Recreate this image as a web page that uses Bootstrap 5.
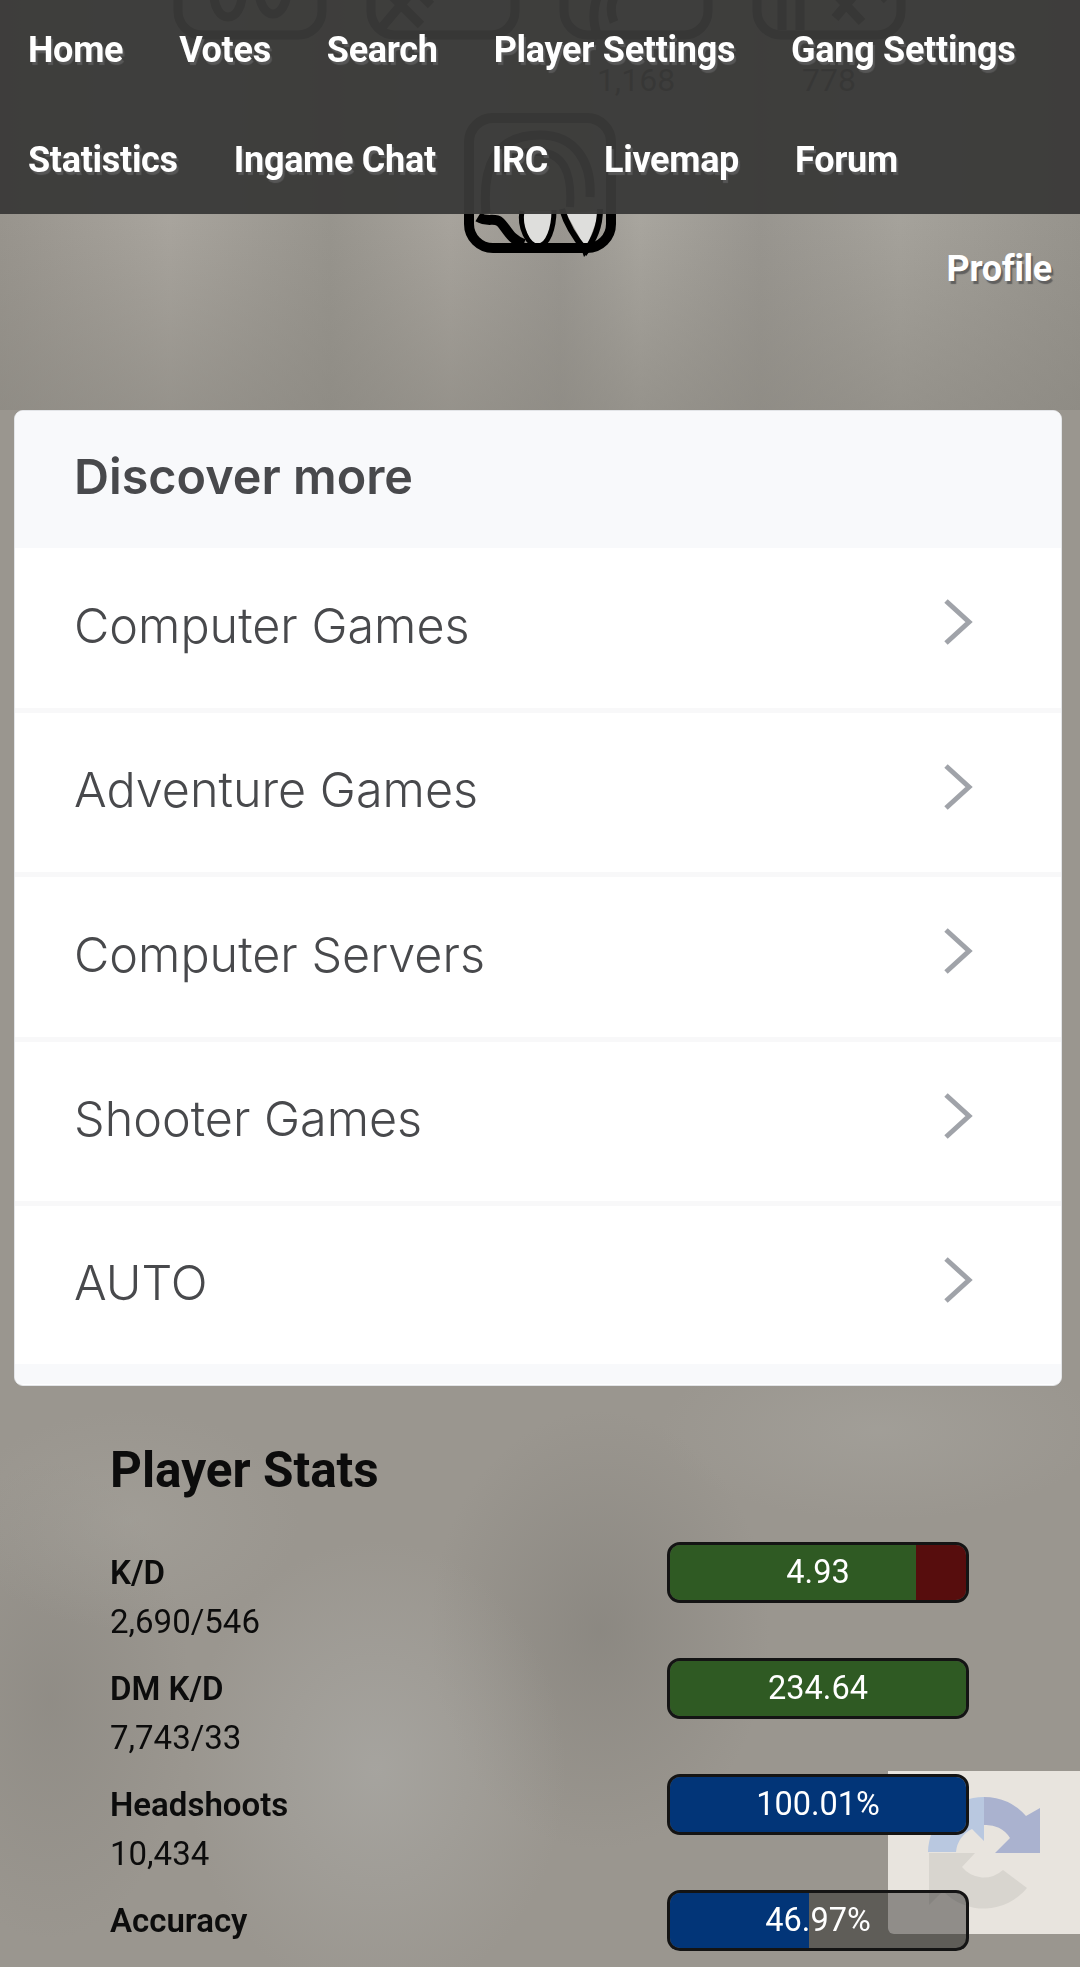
<!DOCTYPE html>
<html lang="en">
<head>
    <meta charset="UTF-8">
    <meta name="viewport" content="width=device-width, initial-scale=1.0">
    <title>Player Stats</title>
    <link rel="stylesheet" href="https://cdn.jsdelivr.net/npm/bootstrap@5.3.0/dist/css/bootstrap.min.css">
    <style>
        html, body { height: 1967px; overflow: hidden; }
        body {
            font-family: Roboto, "Liberation Sans", sans-serif;
            color: #0c0c0c;
            background-color: #9a968f;
            background-image:
                radial-gradient(ellipse 190px 230px at 376px 1770px, rgba(172,171,167,.65), transparent),
                radial-gradient(ellipse 170px 220px at 600px 1630px, rgba(130,127,121,.6), transparent),
                radial-gradient(ellipse 170px 110px at 130px 1520px, rgba(166,163,156,.5), transparent),
                radial-gradient(ellipse 220px 90px at 880px 1430px, rgba(170,168,162,.45), transparent),
                radial-gradient(ellipse 140px 240px at 50px 1700px, rgba(132,129,123,.45), transparent),
                linear-gradient(180deg, transparent 220px, rgba(138,135,128,.6) 410px),
                linear-gradient(90deg, #98948d 0, #a8a49d 170px, #97948d 330px, #a7a39c 450px, #999690 560px, #a8a59e 640px, #98958f 760px, #a5a29b 900px, #96938c 1080px);
            background-size: auto, auto, auto, auto, auto, 100% 410px, 100% 410px;
            background-repeat: no-repeat;
        }
        .top-bar { background: rgba(58,58,56,.955); height: 214px; align-items: flex-start; }
        .top-bar .nav-link, .profile-link {
            color: #fff;
            font-size: 36px;
            font-weight: 700;
            letter-spacing: -.3px;
            text-shadow: 2px 3px 1px rgba(90,90,90,.9);
        }
        .top-bar .nav-link { padding: 0 28px; height: 110px; line-height: 101px; }
        .top-bar .nav-item:last-child .nav-link { padding-right: 0; }
        .icon-strip { margin-top: -100px; gap: 39px; height: 140px; padding-left: 173px; }
        .icon-cell { width: 154px; }
        .count-strip { padding-left: 173px; gap: 39px; height: 60px; line-height: 80px; font-size: 32px; }
        .count-strip > div { width: 154px; text-align: center; }
        .center-icon { width: 152px; height: 140px; margin: 13px auto 0; display: block; overflow: visible; }
        .profile-link { display: block; text-align: right; padding-right: 28px; line-height: 52px; margin-top: -10px; margin-bottom: -2px; text-decoration: none; }

        .discover-box {
            margin: 117px 18px 0 14px;
            border: 1px solid #e3e5e8;
            border-radius: 9px;
            overflow: hidden;
            height: 976px;
            font-family: Inter, "Liberation Sans", sans-serif;
            color: #48494c;
        }
        .discover-box .card-header {
            height: 137px;
            background: #f8f9fb;
            border: 0;
            padding: 0 0 0 59px;
            line-height: 131px;
            font-size: 48.5px;
            font-weight: 600;
        }
        .discover-box > .list-group { border: 0; }
        .discover-box .list-group-item {
            height: 164.5px;
            border: 0;
            border-bottom: 5px solid #f8f8f9;
            padding: 0 88px 3px 59px;
            font-size: 48.5px;
            font-weight: 300;
            color: #48494c;
        }
        .discover-box .list-group-item:last-child { border-bottom: 0; height: 158px; }
        .discover-box .card-footer { height: 20px; padding: 0; background: #f8f9fb; border: 0; }
        .chev { width: 30px; height: 46px; margin-top: -8px; }

        .stats-wrap { margin: 54px 111px 0 110px; position: relative; z-index: 2; }
        .stats-title { font-size: 49.5px; font-weight: 700; line-height: 60px; margin-bottom: 42px; }
        .stat-row { margin-bottom: 16.5px; }
        .stat-name { font-size: 33px; font-weight: 600; line-height: 61px; }
        .stat-val { font-size: 33px; line-height: 38.5px; }
        .stat-bar {
            position: relative;
            width: 302px;
            height: 61px;
            border: 3px solid #141414;
            border-radius: 13px;
            background: rgba(0,0,0,.38);
        }
        .stat-bar .progress-bar { background: transparent; }
        .fill-green { background: #2f5a23 !important; }
        .fill-red { background: #570d0d !important; }
        .fill-blue { background: #023578 !important; }
        .stat-label {
            position: absolute;
            inset: 0;
            color: #fff;
            font-size: 32.5px;
            line-height: 55px;
            text-align: center;
        }
        .captcha-badge {
            position: fixed;
            left: 888px;
            top: 1771px;
            width: 192px;
            height: 163px;
            background: #e8e4de;
            border-bottom-left-radius: 6px;
            z-index: 1;
        }
    </style>
</head>
<body>
    <!-- Menu sits over the page -->
    <nav class="navbar fixed-top p-0 top-bar">
        <ul class="nav flex-wrap w-100">
            <li class="nav-item"><a class="nav-link" href="#">Home</a></li>
            <li class="nav-item"><a class="nav-link" href="#">Votes</a></li>
            <li class="nav-item"><a class="nav-link" href="#">Search</a></li>
            <li class="nav-item"><a class="nav-link" href="#">Player Settings</a></li>
            <li class="nav-item"><a class="nav-link" href="#">Gang Settings</a></li>
            <li class="nav-item"><a class="nav-link" href="#">Statistics</a></li>
            <li class="nav-item"><a class="nav-link" href="#">Ingame Chat</a></li>
            <li class="nav-item"><a class="nav-link" href="#">IRC</a></li>
            <li class="nav-item"><a class="nav-link" href="#">Livemap</a></li>
            <li class="nav-item"><a class="nav-link" href="#">Forum</a></li>
        </ul>
    </nav>

    <!-- Icons behind the menu -->
    <div class="d-flex icon-strip">
        <svg class="icon-cell" viewBox="0 0 154 140" fill="none" stroke="#000" stroke-width="9">
            <rect x="5" y="5" width="144" height="130" rx="24"/>
            <ellipse cx="55" cy="95" rx="14" ry="22"/><ellipse cx="100" cy="90" rx="14" ry="24"/>
        </svg>
        <svg class="icon-cell" viewBox="0 0 154 140" fill="none" stroke="#000" stroke-width="9">
            <rect x="5" y="5" width="144" height="130" rx="24"/>
            <path d="M12 132 60 75M25 95l30 30M40 80l25 25"/>
        </svg>
        <svg class="icon-cell" viewBox="0 0 154 140" fill="none" stroke="#000" stroke-width="9">
            <rect x="5" y="5" width="144" height="130" rx="24"/>
            <path d="M60 70C30 90 32 125 40 138M70 80C50 95 50 110 55 122"/>
        </svg>
        <svg class="icon-cell" viewBox="0 0 154 140" fill="none" stroke="#000" stroke-width="9">
            <rect x="5" y="5" width="144" height="130" rx="24"/>
            <path d="M30 85v45M48 85v45M80 90l30 32M115 80l-32 38M105 70l30 30"/>
        </svg>
    </div>
    <div class="d-flex count-strip">
        <div></div>
        <div></div>
        <div>1,168</div>
        <div>778</div>
    </div>
    <svg class="center-icon" viewBox="0 0 152 140" fill="none">
        <path d="M60 98c-2 14 6 34 14 34s14-16 14-34z" fill="#dededc"/>
        <path d="M102 100l34-2-14 38z" fill="#dededc"/>
        <rect x="5" y="5" width="142" height="130" rx="24" stroke="#000" stroke-width="10"/>
        <path d="M22 100C18 55 30 22 76 22c36 0 52 28 50 62" stroke="#000" stroke-width="9"/>
        <path d="M38 60C44 42 60 36 82 40c20 4 26 24 24 54" stroke="#000" stroke-width="8"/>
        <path d="M58 98c-3 16 6 35 16 35s16-18 16-36" stroke="#000" stroke-width="5"/>
        <path d="M14 104c10 6 16 0 22 5s10 18 24 22" stroke="#000" stroke-width="10"/>
        <path d="M98 96c4 14 12 28 24 42 8-12 14-24 14-42" stroke="#000" stroke-width="6"/>
        <path d="M116 132l12 3-8 9z" fill="#000"/>
    </svg>
    <a class="profile-link" href="#">Profile</a>

    <!-- Discover more -->
    <div class="card discover-box">
        <div class="card-header">Discover more</div>
        <div class="list-group list-group-flush">
            <a href="#" class="list-group-item d-flex justify-content-between align-items-center">Computer Games
                <svg class="chev" viewBox="0 0 30 46" fill="none" stroke="#a0a3a9" stroke-width="5"><path d="M3 2 26 23 3 44"/></svg></a>
            <a href="#" class="list-group-item d-flex justify-content-between align-items-center">Adventure Games
                <svg class="chev" viewBox="0 0 30 46" fill="none" stroke="#a0a3a9" stroke-width="5"><path d="M3 2 26 23 3 44"/></svg></a>
            <a href="#" class="list-group-item d-flex justify-content-between align-items-center">Computer Servers
                <svg class="chev" viewBox="0 0 30 46" fill="none" stroke="#a0a3a9" stroke-width="5"><path d="M3 2 26 23 3 44"/></svg></a>
            <a href="#" class="list-group-item d-flex justify-content-between align-items-center">Shooter Games
                <svg class="chev" viewBox="0 0 30 46" fill="none" stroke="#a0a3a9" stroke-width="5"><path d="M3 2 26 23 3 44"/></svg></a>
            <a href="#" class="list-group-item d-flex justify-content-between align-items-center">AUTO
                <svg class="chev" viewBox="0 0 30 46" fill="none" stroke="#a0a3a9" stroke-width="5"><path d="M3 2 26 23 3 44"/></svg></a>
        </div>
        <div class="card-footer"></div>
    </div>

    <!-- Player stats -->
    <div class="stats-wrap">
        <div class="stats-title">Player Stats</div>
        <div class="d-flex justify-content-between stat-row">
            <div><div class="stat-name">K/D</div><div class="stat-val">2,690/546</div></div>
            <div class="progress stat-bar">
                <div class="progress-bar fill-green" style="width: 83%"></div>
                <div class="progress-bar fill-red" style="width: 17%"></div>
                <div class="stat-label">4.93</div>
            </div>
        </div>
        <div class="d-flex justify-content-between stat-row">
            <div><div class="stat-name">DM K/D</div><div class="stat-val">7,743/33</div></div>
            <div class="progress stat-bar">
                <div class="progress-bar fill-green" style="width: 100%"></div>
                <div class="stat-label">234.64</div>
            </div>
        </div>
        <div class="d-flex justify-content-between stat-row">
            <div><div class="stat-name">Headshoots</div><div class="stat-val">10,434</div></div>
            <div class="progress stat-bar">
                <div class="progress-bar fill-blue" style="width: 100%"></div>
                <div class="stat-label">100.01%</div>
            </div>
        </div>
        <div class="d-flex justify-content-between stat-row">
            <div><div class="stat-name">Accuracy</div></div>
            <div class="progress stat-bar">
                <div class="progress-bar fill-blue" style="width: 46.97%"></div>
                <div class="stat-label">46.97%</div>
            </div>
        </div>
    </div>

    <!-- reCAPTCHA badge -->
    <div class="captcha-badge">
        <svg width="192" height="163" viewBox="0 0 192 163">
            <path d="M96 26A56 56 0 0 1 138 45L152 37V82H107L122 67A28 28 0 0 0 96 54Z" fill="#aab2cf"/>
            <path d="M96 26A56 56 0 0 0 40 81H68A28 28 0 0 1 84 58L96 70Z" fill="#b9c8e0"/>
            <path d="M41 82H87L74 96A28 28 0 0 0 115 99L139 117A56 56 0 0 1 55 120L41 134Z" fill="#d8d5cf"/>
        </svg>
    </div>

    <script src="https://cdn.jsdelivr.net/npm/bootstrap@5.3.0/dist/js/bootstrap.bundle.min.js"></script>
</body>
</html>
